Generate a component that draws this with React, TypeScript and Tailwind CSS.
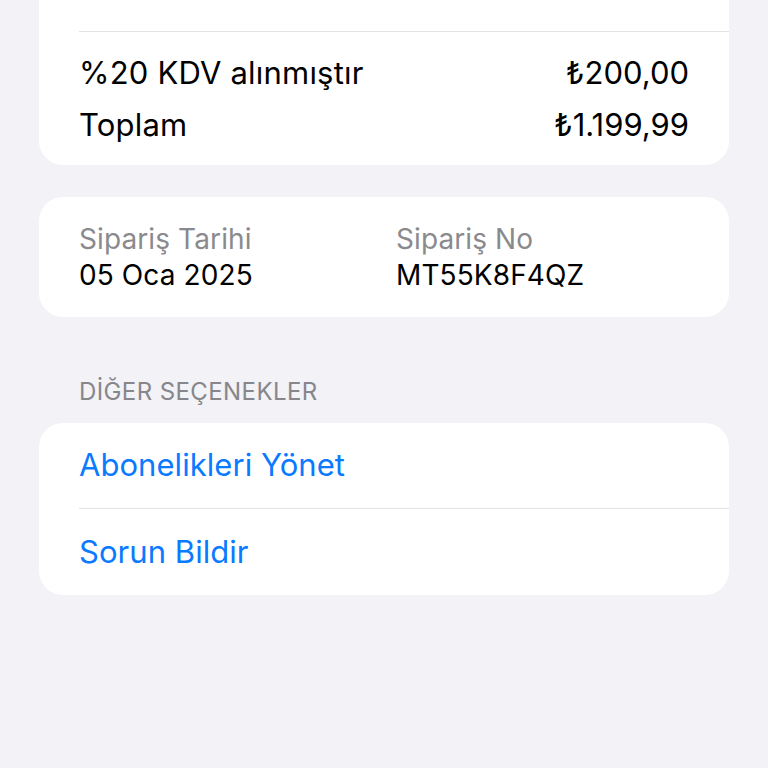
const font = { fontFamily: 'Inter, "Liberation Sans", sans-serif' }

function Row({ label, value }: { label: string, value: string }) {
  return (
    <div className="flex items-center justify-between h-[52px] text-[31px] text-black">
      <span className="tracking-[0.2px]">{label}</span>
      <span className="tracking-[0px]">{value}</span>
    </div>
  )
}

function Action({ label, last }: { label: string, last?: boolean }) {
  return (
    <div className={`h-[86px] flex items-center text-[31px] text-[#0a7aff] tracking-[0.05px] ${last ? '' : 'border-b border-[#e3e3e6]'}`}>
      {label}
    </div>
  )
}

export default function App() {
  return (
    <div className="min-h-[768px] bg-[#f2f2f7] px-[39px] pb-10" style={font}>
      {/* Summary */}
      <div className="bg-white rounded-b-[24px] pl-[40px]">
        <div className="h-[32px] border-b border-[#e3e3e6]" />
        <div className="pr-[40px] pt-[15px] pb-[14px]">
          <Row label="%20 KDV alınmıştır" value="₺200,00" />
          <Row label="Toplam" value="₺1.199,99" />
        </div>
      </div>

      {/* Order info */}
      <div className="bg-white rounded-[24px] mt-[32px] px-[40px] py-[24px] grid grid-cols-[317px_1fr] text-[28px] tracking-[0.1px]">
        <div>
          <div className="h-[36px] leading-[36px] text-[#8a8a8e]">Sipariş Tarihi</div>
          <div className="h-[36px] leading-[36px] text-black">05 Oca 2025</div>
        </div>
        <div>
          <div className="h-[36px] leading-[36px] text-[#8a8a8e]">Sipariş No</div>
          <div className="h-[36px] leading-[36px] text-black">MT55K8F4QZ</div>
        </div>
      </div>

      {/* Other options */}
      <div className="mt-[58px] pl-[40px] h-[34px] leading-[34px] text-[24px] text-[#86868b] uppercase tracking-[0.4px]">
        DİĞER SEÇENEKLER
      </div>
      <div className="bg-white rounded-[24px] mt-[14px] pl-[40px]">
        <Action label="Abonelikleri Yönet" />
        <Action label="Sorun Bildir" last />
      </div>
    </div>
  )
}
